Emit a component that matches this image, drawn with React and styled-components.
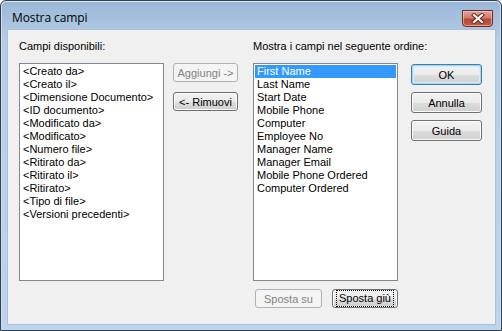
import React from "react";
import styled, { createGlobalStyle, css } from "styled-components";

const Global = createGlobalStyle`
  html, body { margin: 0; padding: 0; background: #ffffff; }
  #root { width: 502px; height: 331px; }
`;

const Window = styled.div`
  box-sizing: border-box;
  width: 502px;
  height: 331px;
  border: 1px solid #34404c;
  border-radius: 6px 6px 0 0;
  background: linear-gradient(to bottom, #9ab7d6 0px, #b5cee8 40px, #bcd4ed 100%);
  display: flex;
  flex-direction: column;
  padding: 0 6px 6px 7px;
  box-shadow: inset 0 1px 0 #d9e6f3, inset 1px 0 0 #cfdeee, inset -1px 0 0 #cfdeee;
`;

const TitleBar = styled.div`
  height: 29px;
  flex: none;
  display: flex;
  align-items: flex-start;
  justify-content: space-between;
  padding-right: 2px;
`;

const Title = styled.div`
  font-family: "Open Sans", "Noto Sans", sans-serif;
  font-size: 12px;
  color: #000;
  padding: 9px 0 0 4px;
  line-height: 16px;
  letter-spacing: -0.1px;
`;

const CloseButton = styled.div`
  box-sizing: border-box;
  width: 31px;
  height: 17px;
  margin-top: 9px;
  border: 1px solid #6e2c27;
  border-radius: 0 0 4px 4px;
  background: linear-gradient(to bottom, #e0a69d 0%, #d27a6d 45%, #b84836 55%, #c75a45 100%);
  box-shadow: inset 0 0 0 1px rgba(255, 210, 200, 0.55);
  display: flex;
  align-items: center;
  justify-content: center;
`;

const Client = styled.div`
  flex: 1;
  background: #f0f0f0;
  display: flex;
  padding: 10px 0 0 11px;
  box-shadow: 0 0 0 1px #a9c0da;
`;

const Column = styled.div`
  display: flex;
  flex-direction: column;
  width: ${(p) => p.$w}px;
  margin-left: ${(p) => p.$ml || 0}px;
  padding-top: ${(p) => p.$pt || 0}px;
  gap: ${(p) => p.$gap || 0}px;
`;

const Label = styled.div`
  font-family: "Liberation Sans", Arial, sans-serif;
  font-size: 11px;
  line-height: 13px;
  height: 13px;
  color: #000;
  white-space: nowrap;
`;

const ListBox = styled.div`
  box-sizing: border-box;
  margin-top: 10px;
  width: 145px;
  height: 218px;
  background: #fff;
  border: 1px solid #828790;
  padding: 1px;
  display: flex;
  flex-direction: column;
  overflow: hidden;
`;

const Item = styled.div`
  font-family: "Liberation Sans", Arial, sans-serif;
  font-size: 11px;
  line-height: 13px;
  height: 13px;
  padding-left: 2px;
  white-space: nowrap;
  color: ${(p) => (p.$selected ? "#fff" : "#000")};
  background: ${(p) => (p.$selected ? "#3399ff" : "transparent")};
`;

const Button = styled.div`
  box-sizing: border-box;
  width: ${(p) => p.$w}px;
  height: ${(p) => p.$h}px;
  border-radius: 3px;
  display: flex;
  align-items: center;
  justify-content: center;
  font-family: "Liberation Sans", Arial, sans-serif;
  font-size: 11px;
  color: #000;
  border: 1px solid #707070;
  background: linear-gradient(to bottom, #f2f2f2 0%, #ebebeb 50%, #dddddd 51%, #cfcfcf 100%);
  box-shadow: inset 0 0 0 1px #fbfbfb;
  ${(p) =>
    p.$default &&
    css`
      border-color: #3c7fb1;
      box-shadow: inset 0 0 0 1px #9fd4f3, inset 0 0 0 2px #d6eefb;
    `}
  ${(p) =>
    p.$disabled &&
    css`
      border-color: #adb2b5;
      background: #f4f4f4;
      color: #838383;
      box-shadow: none;
    `}
`;

const FocusText = styled.span`
  outline: 1px dotted #000;
  outline-offset: 1px;
  padding: 0 1px;
  line-height: 13px;
`;

const BottomRow = styled.div`
  display: flex;
  gap: 10px;
  margin-top: 8px;
  padding-left: 2px;
`;

const CloseIcon = () => (
  <svg width="14" height="11" viewBox="0 0 14 11">
    <path d="M3 2 L11 9 M11 2 L3 9" stroke="#5a2520" strokeWidth="4" strokeLinecap="square" />
    <path d="M3 2 L11 9 M11 2 L3 9" stroke="#ffffff" strokeWidth="2.2" strokeLinecap="square" />
  </svg>
);

const available = [
  "<Creato da>",
  "<Creato il>",
  "<Dimensione Documento>",
  "<ID documento>",
  "<Modificato da>",
  "<Modificato>",
  "<Numero file>",
  "<Ritirato da>",
  "<Ritirato il>",
  "<Ritirato>",
  "<Tipo di file>",
  "<Versioni precedenti>",
];

const ordered = [
  "First Name",
  "Last Name",
  "Start Date",
  "Mobile Phone",
  "Computer",
  "Employee No",
  "Manager Name",
  "Manager Email",
  "Mobile Phone Ordered",
  "Computer Ordered",
];

export default function App() {
  return (
    <>
      <Global />
      <Window>
        <TitleBar>
          <Title>Mostra campi</Title>
          <CloseButton>
            <CloseIcon />
          </CloseButton>
        </TitleBar>
        <Client>
          <Column $w={145}>
            <Label>Campi disponibili:</Label>
            <ListBox>
              {available.map((t) => (
                <Item key={t}>{t}</Item>
              ))}
            </ListBox>
          </Column>
          <Column $w={65} $ml={9} $pt={23} $gap={10}>
            <Button $w={65} $h={19} $disabled>
              Aggiungi -&gt;
            </Button>
            <Button $w={65} $h={19}>
              &lt;- Rimuovi
            </Button>
          </Column>
          <Column $w={145} $ml={15}>
            <Label>Mostra i campi nel seguente ordine:</Label>
            <ListBox>
              {ordered.map((t, i) => (
                <Item key={t} $selected={i === 0}>
                  {t}
                </Item>
              ))}
            </ListBox>
            <BottomRow>
              <Button $w={67} $h={19} $disabled>
                Sposta su
              </Button>
              <Button $w={66} $h={19}>
                <FocusText>Sposta giù</FocusText>
              </Button>
            </BottomRow>
          </Column>
          <Column $w={71} $ml={13} $pt={24} $gap={7}>
            <Button $w={71} $h={21} $default>
              OK
            </Button>
            <Button $w={71} $h={21}>
              Annulla
            </Button>
            <Button $w={71} $h={21}>
              Guida
            </Button>
          </Column>
        </Client>
      </Window>
    </>
  );
}
